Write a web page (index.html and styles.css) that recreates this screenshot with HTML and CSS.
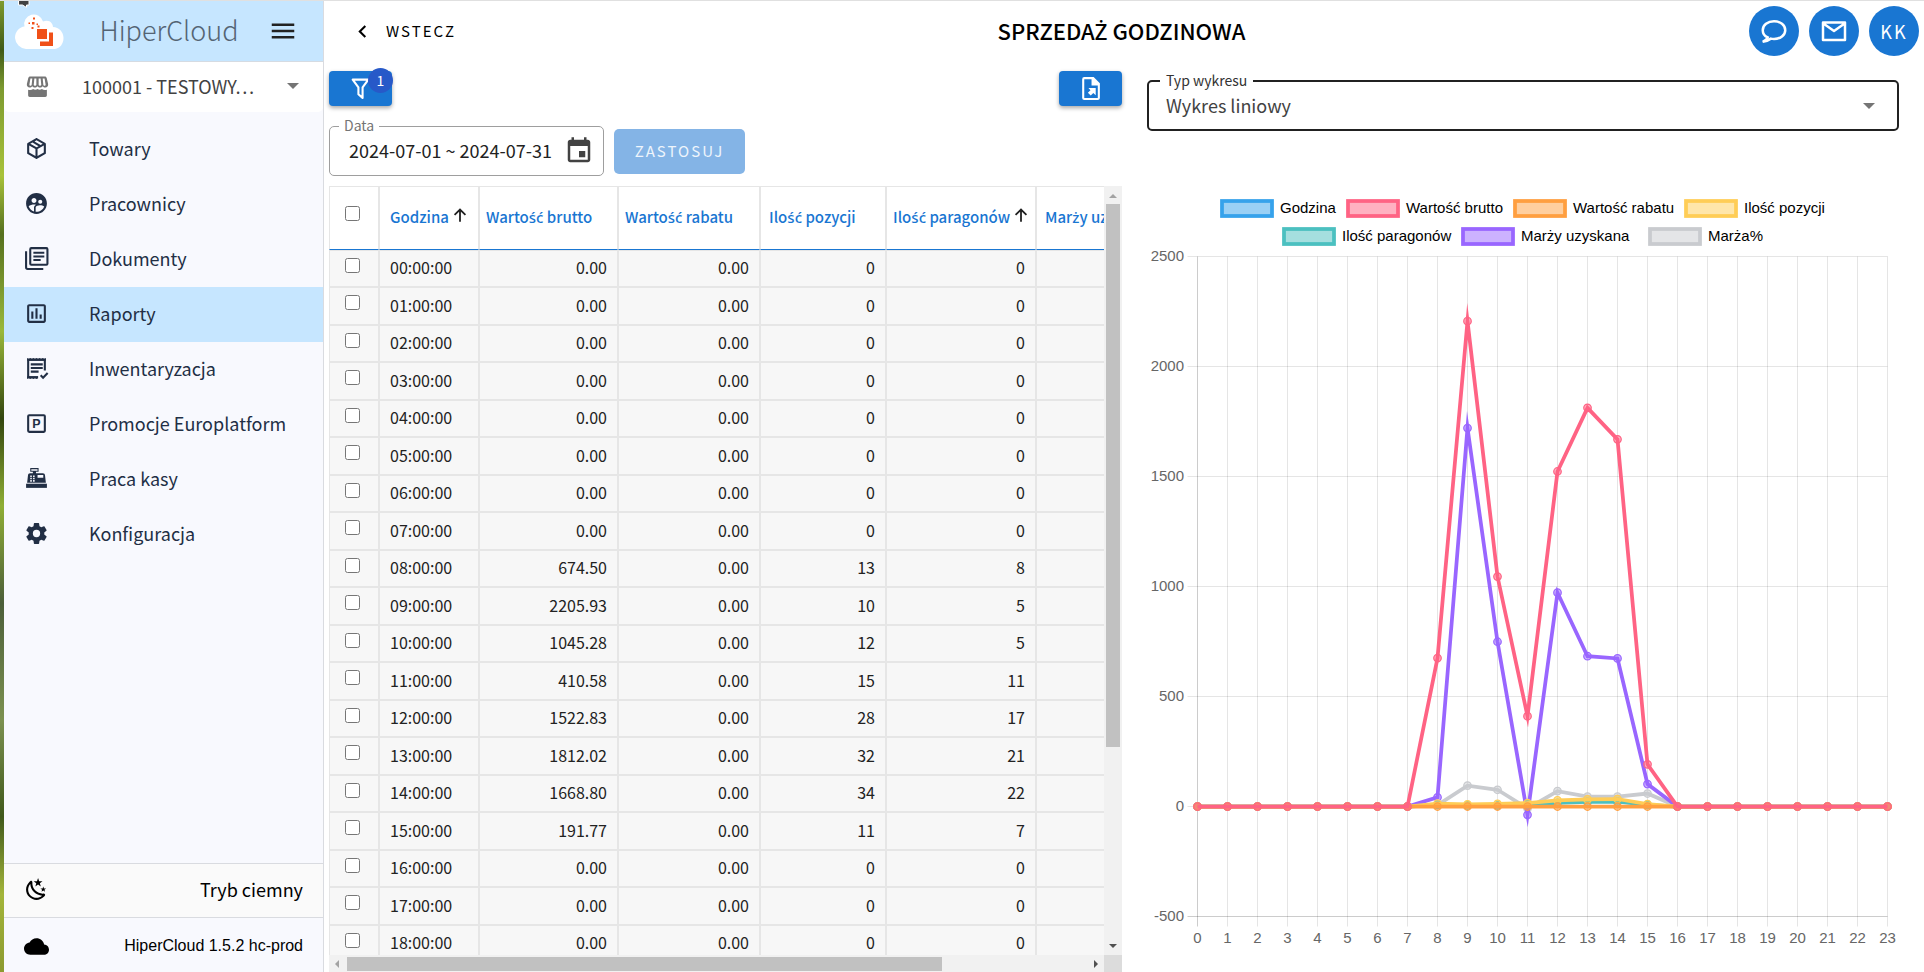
FILE: index.html
```html
<!DOCTYPE html>
<html lang="pl">
<head>
<meta charset="utf-8">
<title>HiperCloud</title>
<link rel="stylesheet" href="styles.css">
</head>
<body>
<div class="app">
  <div class="backdrop"></div>
  <aside class="sidebar">
    <svg class="notch" viewBox="0 0 12 7" aria-hidden="true"><path fill="#424242" stroke="#fff" d="M.5-2v6h4l4 2.500V4H11V-2z"/></svg>
    <header class="brand">
      <svg class="brand-logo" viewBox="0 0 50 40" aria-hidden="true">
        <path fill="#fff" d="M12 38A12 12 0 0 1 1 27C1 20 6 16 10.500 15.500A9.500 9.500 0 0 1 29 10.500C36 8 39 13 39 16C45 16 49.500 21 49.500 27C49.500 33 46 37 41 38Z"/>
        <path fill="#f05018" d="M23 18h10v10H23zM35 21.500h4V35H26v-4.500h9z"/>
        <path fill="#f05018" d="M19 6.500h2v2h-2zM14.500 11.500h1.500v1.500h-1.500zM18 11h2.500v2.500H18zM22.500 12.500h1.500v1.500h-1.500zM17.500 16h2v2h-2zM23.500 14.500h2v2h-2z"/>
      </svg>
      <h1 class="brand-name">HiperCloud</h1>
      <button class="icon-button" type="button" aria-label="Menu">
        <svg class="icon-large" viewBox="0 0 24 24"><path d="M3 6h18v2H3zM3 11h18v2H3zM3 16h18v2H3z"/></svg>
      </button>
    </header>
    <div class="store">
      <svg class="icon store-icon" viewBox="0 0 24 24" aria-hidden="true">
        <path fill-rule="evenodd" d="M5 2.500h14c1 0 1.600.5 1.900 1.500l1.300 5.500c.3 2-1 3.500-2.700 3.500-1 0-1.900-.5-2.500-1.300-.6.800-1.500 1.300-2.500 1.300s-1.900-.5-2.500-1.300c-.6.800-1.500 1.300-2.500 1.300s-1.900-.5-2.500-1.300c-.6.800-1.500 1.300-2.500 1.300-1.700 0-3-1.500-2.700-3.500L3.100 4c.3-1 .9-1.500 1.900-1.500zM5.200 4.300l-1 6c0 1.300 2 1.300 2.200 0l.6-6zM9 4.300l-.6 6c.2 1.300 2.300 1.300 2.500 0v-6zM13.100 4.300v6c.2 1.300 2.300 1.300 2.500 0l-.6-6zM17 4.300l.6 6c.2 1.300 2.200 1.300 2.200 0l-1-6z"/>
        <path d="M3 15c2 .7 3.400.3 4.800-.7 1.300 1 3 1 4.200 0 1.300 1 3 1 4.200 0 1.400 1 2.800 1.400 4.800.7v5.500c0 1-.6 1.500-1.500 1.500h-15c-.9 0-1.500-.5-1.500-1.500z"/>
      </svg>
      <select class="store-select" aria-label="Sklep"><option>100001 - TESTOWY…</option></select>
      <span class="caret"></span>
    </div>
    <nav class="menu">
      <a class="menu-item" href="#"><svg class="icon" viewBox="0 0 24 24"><path d="M21,16.5C21,16.88 20.79,17.21 20.47,17.38L12.57,21.82C12.41,21.94 12.21,22 12,22C11.79,22 11.59,21.94 11.43,21.82L3.53,17.38C3.21,17.21 3,16.88 3,16.5V7.5C3,7.12 3.21,6.79 3.53,6.62L11.43,2.18C11.59,2.06 11.79,2 12,2C12.21,2 12.41,2.06 12.57,2.18L20.47,6.62C20.79,6.79 21,7.12 21,7.5V16.5M12,4.15L10.11,5.22L16,8.61L17.96,7.5L12,4.15M6.04,7.5L12,10.85L13.96,9.75L8.08,6.35L6.04,7.5M5,15.91L11,19.29V12.58L5,9.21V15.91M19,15.91V9.21L13,12.58V19.29L19,15.91Z"/></svg>Towary</a>
      <a class="menu-item" href="#"><svg class="icon" viewBox="0 0 24 24"><path d="M11.99 2c-5.52 0-10 4.48-10 10s4.48 10 10 10 10-4.48 10-10-4.48-10-10-10zm3.610 6.340c1.070 0 1.930.860 1.930 1.930 0 1.070-.860 1.930-1.930 1.930-1.070 0-1.930-.860-1.930-1.930-.010-1.070.860-1.930 1.930-1.930zm-6-1.580c1.300 0 2.360 1.060 2.360 2.360 0 1.300-1.060 2.360-2.360 2.360s-2.360-1.060-2.360-2.360c0-1.310 1.050-2.360 2.360-2.360zm0 9.130v3.750c-2.400-.750-4.300-2.600-5.140-4.960 1.050-1.120 3.670-1.690 5.140-1.690.530 0 1.200.080 1.900.220-1.640.870-1.900 2.020-1.900 2.680zM11.990 20c-.270 0-.530-.010-.790-.040v-4.070c0-1.420 2.940-2.130 4.400-2.130 1.070 0 2.920.390 3.840 1.150-1.170 2.970-4.060 5.090-7.450 5.090z"/></svg>Pracownicy</a>
      <a class="menu-item" href="#"><svg class="icon" viewBox="0 0 24 24"><g fill="none" stroke="currentColor" stroke-width="2"><rect x="6" y="2" width="16.500" height="16" rx="1"/><path d="M2 5v15.500c0 .8.500 1.500 1.500 1.500H18.500M9 6.500h10.500M9 10h10.500M9 13.500h7"/></g></svg>Dokumenty</a>
      <a class="menu-item menu-item-active" href="#" aria-current="page"><svg class="icon" viewBox="0 0 24 24"><path d="M9 17H7v-7h2v7zm4 0h-2V7h2v10zm4 0h-2v-4h2v4zm2 2H5V5h14v14zm0-16H5c-1.100 0-2 .9-2 2v14c0 1.100.9 2 2 2h14c1.100 0 2-.9 2-2V5c0-1.100-.9-2-2-2z"/></svg>Raporty</a>
      <a class="menu-item" href="#"><svg class="icon" viewBox="0 0 24 24"><path fill="none" stroke="currentColor" stroke-width="2" d="M13.500 20.500H4V3.500h16V14M6.500 8h11.500M6.500 11.500h11.500M6.500 15h7.500M16 18.500l2.300 2.300 4.400-4.500"/><path d="M3 4.500V2l1.500 1.200L6 2l1.500 1.200L9 2l1.500 1.200L12 2l1.500 1.200L15 2l1.500 1.200L18 2l1.500 1.200L21 2v2.500zM3 19.500V22l1.500-1.200L6 22l1.500-1.200L9 22l1.500-1.200L12 22l1.500-1.200v-1.300z"/></svg>Inwentaryzacja</a>
      <a class="menu-item" href="#"><svg class="icon" viewBox="0 0 24 24"><rect x="4" y="4" width="16" height="16" rx="1" fill="none" stroke="currentColor" stroke-width="2"/><text class="icon-letter" x="12" y="16.500">P</text></svg>Promocje Europlatform</a>
      <a class="menu-item" href="#"><svg class="icon" viewBox="0 0 24 24"><path fill-rule="evenodd" d="M6 2h8v3.500h-2.500V7H18c1.500 0 2 .8 2.200 2L21 16H3l.8-7C4 7.800 4.500 7 6 7h2.500V5.500H6zM7 3v1.500h6V3zM6 9v1.500h1.500V9zM8.700 9v1.500h1.500V9zM6 11.300v1.500h1.500v-1.500zM8.700 11.300v1.500h1.500v-1.500zM6 13.500V15h1.500v-1.500zM8.700 13.500V15h1.500v-1.500zM13 8.700v2.500h5.500V8.700z"/><path d="M2 17h20v4H2z"/></svg>Praca kasy</a>
      <a class="menu-item" href="#"><svg class="icon" viewBox="0 0 24 24"><path d="M12,15.5A3.5,3.5 0 0,1 8.5,12A3.5,3.5 0 0,1 12,8.5A3.5,3.5 0 0,1 15.5,12A3.5,3.5 0 0,1 12,15.5M19.43,12.97C19.47,12.65 19.5,12.33 19.5,12C19.5,11.67 19.47,11.34 19.43,11L21.54,9.37C21.73,9.22 21.78,8.95 21.66,8.73L19.66,5.27C19.54,5.05 19.27,4.96 19.05,5.05L16.56,6.05C16.04,5.66 15.5,5.32 14.87,5.07L14.5,2.42C14.46,2.18 14.25,2 14,2H10C9.75,2 9.54,2.18 9.5,2.42L9.13,5.07C8.5,5.32 7.96,5.66 7.44,6.05L4.95,5.05C4.73,4.96 4.46,5.05 4.34,5.27L2.34,8.73C2.21,8.95 2.27,9.22 2.46,9.37L4.57,11C4.53,11.34 4.5,11.67 4.5,12C4.5,12.33 4.53,12.65 4.57,12.97L2.46,14.63C2.27,14.78 2.21,15.05 2.34,15.27L4.34,18.73C4.46,18.95 4.73,19.03 4.95,18.95L7.44,17.94C7.96,18.34 8.5,18.68 9.13,18.93L9.5,21.58C9.54,21.82 9.75,22 10,22H14C14.25,22 14.46,21.82 14.5,21.58L14.87,18.93C15.5,18.67 16.04,18.34 16.56,17.94L19.05,18.95C19.27,19.03 19.54,18.95 19.66,18.73L21.66,15.27C21.78,15.05 21.73,14.78 21.54,14.63L19.43,12.97Z"/></svg>Konfiguracja</a>
    </nav>
    <button class="theme-toggle" type="button">
      <svg class="icon" viewBox="0 0 24 24"><path d="M17.75,4.09L15.22,6.03L16.13,9.09L13.5,7.28L10.87,9.09L11.78,6.03L9.25,4.09L12.44,4L13.5,1L14.56,4L17.75,4.09M21.25,11L19.61,12.25L20.2,14.23L18.5,13.06L16.8,14.23L17.39,12.25L15.75,11L17.81,10.95L18.5,9L19.19,10.95L21.25,11M18.97,15.95C19.8,15.87 20.69,17.05 20.16,17.8C19.84,18.25 19.5,18.67 19.08,19.07C15.17,23 8.84,23 4.94,19.07C1.03,15.17 1.03,8.83 4.94,4.93C5.34,4.53 5.76,4.17 6.21,3.85C6.96,3.32 8.14,4.21 8.06,5.04C7.79,7.9 8.75,10.87 10.95,13.06C13.14,15.26 16.1,16.22 18.97,15.95M17.33,17.97C14.5,17.81 11.7,16.64 9.53,14.5C7.36,12.31 6.2,9.5 6.04,6.68C3.23,9.82 3.34,14.64 6.35,17.66C9.37,20.67 14.19,20.78 17.33,17.97Z"/></svg>
      Tryb ciemny
    </button>
    <footer class="version">
      <svg class="icon" viewBox="0 0 24 24"><path d="M19.350 10.040C18.670 6.590 15.640 4 12 4 9.110 4 6.600 5.640 5.350 8.040 2.340 8.360 0 10.910 0 14c0 3.310 2.690 6 6 6h13c2.760 0 5-2.240 5-5 0-2.640-2.050-4.780-4.650-4.960z"/></svg>
      HiperCloud 1.5.2 hc-prod
    </footer>
  </aside>

  <main class="main">
    <header class="topbar">
      <button class="back" type="button">
        <svg class="icon" viewBox="0 0 24 24"><path d="M15.410 16.580L10.830 12l4.580-4.590L14 6l-6 6 6 6z"/></svg>
        WSTECZ
      </button>
      <h2 class="page-title">SPRZEDA<span class="accented">Ż</span> GODZINOWA</h2>
      <div class="actions">
        <button class="round" type="button" aria-label="Czat"><svg class="icon-large" viewBox="0 0 24 24"><path fill="none" stroke="currentColor" stroke-width="2" d="M7 17.100C4.500 16 3 13.900 3 11.300 3 7.300 7 4.200 12 4.200s9 3.100 9 7.100-4 7.100-9 7.100c-.9 0-1.700-.1-2.500-.3C7.700 19.400 5.800 20.300 3 20.700 5 19.600 6.500 18.500 7 17.100z"/></svg></button>
        <button class="round" type="button" aria-label="Poczta"><svg class="icon-large" viewBox="0 0 24 24"><path fill="none" stroke="currentColor" stroke-width="2" stroke-linejoin="round" d="M3.200 5.200h17.600v14H3.200zM3.200 5.800L12 12l8.800-6.200"/></svg></button>
        <button class="round" type="button">KK</button>
      </div>
    </header>

    <div class="panes">
      <section class="pane-table">
        <div class="toolbar">
          <button class="tool" type="button" aria-label="Filtry">
            <svg class="icon" viewBox="0 0 24 24"><path fill="none" stroke="currentColor" stroke-width="2" stroke-linejoin="round" d="M4.500 3.500h15L14 11v10l-4-3.500V11z"/></svg>
            <span class="badge">1</span>
          </button>
          <button class="tool" type="button" aria-label="Eksport">
            <svg class="icon" viewBox="0 0 24 24"><path fill-rule="evenodd" d="M6 1h9l6 6v14a2 2 0 0 1-2 2H6a2 2 0 0 1-2-2V3a2 2 0 0 1 2-2zm0 2v18h13V9h-6V3z"/><path d="M10 11.500h7v7l-2.300-2.300-2.500 2.600-2.700-2.700 2.500-2.500z"/></svg>
          </button>
        </div>
        <form class="filters">
          <fieldset class="field field-date">
            <legend><label for="date">Data</label></legend>
            <input class="field-input" id="date" type="text" value="2024-07-01 ~ 2024-07-31">
            <svg class="icon-large calendar" viewBox="0 0 24 24"><path d="M17 12h-5v5h5v-5zM16 1v2H8V1H6v2H5c-1.110 0-1.990.9-1.990 2L3 19c0 1.100.89 2 2 2h14c1.100 0 2-.9 2-2V5c0-1.100-.9-2-2-2h-1V1h-2zm3 18H5V8h14v11z"/></svg>
          </fieldset>
          <button class="apply" type="button">ZASTOSUJ</button>
        </form>
        <div class="grid">
          <div class="grid-view">
            <table class="hours">
              <colgroup><col class="c-check"><col class="c-hour"><col class="c-gross"><col class="c-disc"><col class="c-pos"><col class="c-rec"><col class="c-margin"></colgroup>
              <thead>
                <tr>
                  <th><input type="checkbox" aria-label="Zaznacz wszystko"></th>
                  <th>Godzina<svg class="sort" viewBox="0 0 24 24"><path d="M13.200 21h-2.400V7.500l-5.200 5.200-1.700-1.700L12 2.900l8.100 8.100-1.700 1.700-5.200-5.200z"/></svg></th>
                  <th>Warto<span class="accented">ść</span> brutto</th>
                  <th>Warto<span class="accented">ść</span> rabatu</th>
                  <th>Ilo<span class="accented">ść</span> pozycji</th>
                  <th>Ilo<span class="accented">ść</span> paragonów<svg class="sort" viewBox="0 0 24 24"><path d="M13.200 21h-2.400V7.500l-5.200 5.200-1.700-1.700L12 2.900l8.100 8.100-1.700 1.700-5.200-5.200z"/></svg></th>
                  <th>Mar<span class="accented">ż</span>y uzyskana</th>
                </tr>
              </thead>
              <tbody id="rows"></tbody>
            </table>
          </div>
          <div class="bar bar-v"><span class="arrow arrow-up"></span><span class="thumb"></span><span class="arrow arrow-down"></span></div>
          <div class="bar bar-h"><span class="arrow arrow-left"></span><span class="thumb"></span><span class="arrow arrow-right"></span></div>
          <div class="corner"></div>
        </div>
      </section>

      <section class="pane-chart">
        <fieldset class="field field-type">
          <legend><label for="type">Typ wykresu</label></legend>
          <select class="field-input" id="type"><option>Wykres liniowy</option></select>
          <span class="caret"></span>
        </fieldset>
        <svg class="chart" id="chart" viewBox="0 0 752 770" role="img" aria-label="Wykres liniowy"></svg>
      </section>
    </div>
  </main>
</div>
<script src="app.js"></script>
</body>
</html>
```
FILE: styles.css
```css
* { box-sizing: border-box; }

body {
  margin: 0;
  font-family: "Noto Sans CJK JP", "Noto Sans", sans-serif;
  font-size: 16px;
  line-height: 24px;
  color: #222;
  background: #fff;
}

button, select, input { font: inherit; color: inherit; }
button { border: 0; padding: 0; background: none; cursor: pointer; }

.app {
  display: grid;
  grid-template-columns: 4px 320px minmax(0, 1fr);
  grid-template-rows: minmax(0, 1fr);
  height: 100vh;
  border-top: 1px solid #e0e0e0;
  overflow: hidden;
}

.backdrop {
  background: linear-gradient(#7f9a2c 0%, #3f5a18 5%, #7d9a30 9%, #a8c23a 18%, #56701f 24%, #9ab83a 34%, #33460f 43%, #8fae35 52%, #4c5f3a 62%, #7c9150 74%, #40591c 84%, #a3b53a 92%, #8c9a30 100%);
}

.icon { width: 25px; height: 25px; fill: currentColor; flex: none; }
.icon-large { width: 30px; height: 30px; fill: currentColor; flex: none; display: block; }
.icon-letter { font: bold 12px "Liberation Sans", sans-serif; text-anchor: middle; }

/* Polish letters that the main family lacks */
.accented { font-family: "Noto Sans", sans-serif; line-height: 1; }

.caret {
  width: 0;
  height: 0;
  border: 6px solid transparent;
  border-top-color: #757575;
  border-bottom: 0;
  pointer-events: none;
}

/* Sidebar */
.sidebar {
  position: relative;
  display: flex;
  flex-direction: column;
  background: #f8f9fe;
  border-right: 1px solid #d9dbe0;
}
.notch { position: absolute; top: 0; left: 14px; width: 12px; height: 7px; }

.brand {
  display: flex;
  align-items: center;
  height: 61px;
  padding: 0 25px 0 10px;
  background: #c6e6ff;
  border-bottom: 1px solid #d5dbe2;
}
.brand-logo { width: 50px; height: 40px; }
.brand-name {
  flex: 1;
  margin: 0;
  padding: 0 0 3px 6px;
  text-align: center;
  font-size: 27px;
  font-weight: 300;
  line-height: 40px;
  color: #546474;
}

.store {
  display: flex;
  align-items: center;
  height: 50px;
  padding: 0 24px 2px 21px;
  background: #fff;
  border-radius: 0 0 5px 5px;
  color: #424242;
}
.store-icon { color: #757575; }
.store-select {
  flex: 1;
  min-width: 0;
  margin-left: 32px;
  padding: 0;
  border: 0;
  appearance: none;
  background: none;
  font-size: 18px;
}

.menu { flex: 1; padding-top: 10px; }
.menu-item {
  display: flex;
  align-items: center;
  gap: 40px;
  height: 55px;
  padding: 0 0 3px 20px;
  color: #222f45;
  font-size: 18px;
  text-decoration: none;
}
.menu-item-active { background: #c6e6ff; }

.theme-toggle, .version {
  display: flex;
  align-items: center;
  justify-content: space-between;
  height: 54px;
  padding: 0 20px 3px;
  border-top: 1px solid #d9dbe0;
  color: #000;
}
.theme-toggle { background: #fafafa; font-size: 18px; }
.version { height: 55px; padding: 2px 20px 0; font-family: "Liberation Sans", sans-serif; }

/* Top bar */
.main { display: flex; flex-direction: column; min-width: 0; }
.topbar {
  display: grid;
  grid-template-columns: 1fr auto 1fr;
  align-items: center;
  height: 60px;
  padding: 0 5px 0 0;
  color: #000;
}
.back {
  display: flex;
  align-items: center;
  gap: 11px;
  padding-left: 26px;
  font-size: 15px;
  letter-spacing: 2px;
}
.page-title { margin: 0; padding-bottom: 2px; font-size: 22px; line-height: 32px; font-weight: 500; }
.actions { display: flex; justify-content: flex-end; gap: 10px; }
.round {
  display: grid;
  place-items: center;
  width: 50px;
  height: 50px;
  border-radius: 50%;
  background: #1976d2;
  color: #fff;
  font-size: 18px;
  letter-spacing: 2px;
}

/* Panes */
.panes { flex: 1; display: grid; grid-template-columns: minmax(0, 1fr) minmax(0, 1fr); grid-template-rows: minmax(0, 1fr); min-height: 0; }
.pane-table { display: flex; flex-direction: column; min-height: 0; padding: 10px 2px 0 5px; }
.pane-chart { padding: 10px 25px 0 23px; }

.toolbar { display: flex; justify-content: space-between; }
.tool {
  position: relative;
  display: grid;
  place-items: center;
  width: 63px;
  height: 35px;
  border-radius: 4px;
  background: #1976d2;
  color: #fff;
  box-shadow: 0 2px 4px rgba(0, 0, 0, .35);
}
.badge {
  position: absolute;
  top: -3px;
  right: -1px;
  width: 25px;
  height: 25px;
  border-radius: 50%;
  background: #2759c8;
  font-size: 14px;
  line-height: 24px;
}

.filters { display: flex; align-items: flex-end; gap: 10px; margin-top: 10px; }
.field {
  display: flex;
  align-items: center;
  min-width: 0;
  height: 60px;
  margin: 0;
  border: 1px solid #9e9e9e;
  border-radius: 5px;
}
.field legend { padding: 0 5px 2px; font-size: 14px; line-height: 18px; color: #757575; }
.field-input {
  flex: 1;
  min-width: 0;
  height: 30px;
  padding: 0 0 2px;
  border: 0;
  outline: 0;
  appearance: none;
  background: none;
  font-size: 18px;
}
.field-date { width: 275px; padding: 0 9px 10px; }
.field-date .field-input { padding-left: 10px; }
.calendar { color: #424242; }
.apply {
  width: 131px;
  height: 45px;
  margin-bottom: 2px;
  padding-bottom: 2px;
  border-radius: 5px;
  background: #84b4e6;
  color: #eef5fc;
  font-size: 15px;
  letter-spacing: 2px;
}

.field-type { border: 2px solid #212121; padding: 0 22px 9px 11px; color: #424242; }
.field-type legend { color: #333; padding: 0 6px 2px; }
.field-type .field-input { padding-left: 6px; }

/* Table */
.grid {
  flex: 1;
  display: grid;
  grid-template-columns: minmax(0, 1fr) 18px;
  grid-template-rows: minmax(0, 1fr) 17px;
  min-height: 0;
  margin-top: 10px;
}
.grid-view { overflow: hidden; }
.hours { width: 877px; table-layout: fixed; border-collapse: separate; border-spacing: 0; }
.c-check { width: 50px; }
.c-hour { width: 100px; }
.c-gross { width: 139px; }
.c-disc { width: 142px; }
.c-pos { width: 126px; }
.c-rec { width: 150px; }
.c-margin { width: 170px; }
.hours th, .hours td { border: 1px solid #e6e6e6; padding: 0 10px 3px; white-space: nowrap; }
.hours th {
  height: 64px;
  padding: 0 6px 2px;
  border-bottom-color: #1976d2;
  color: #1976d2;
  font-size: 15px;
  font-weight: 500;
  text-align: left;
}
.hours th:nth-child(2), .hours td:nth-child(2) { padding-left: 10px; text-align: left; }
.hours th:nth-child(5), .hours th:nth-child(7) { padding-left: 8px; }
.hours th:first-child, .hours td:first-child { padding: 0 3px 0 0; text-align: center; }
.hours tr { height: 37px; }
.hours tr:nth-child(even) { height: 38px; }
.hours td { background: #f7f7f7; text-align: right; line-height: 24px; }
.hours input { width: 15px; height: 15px; margin: 0; vertical-align: 3px; }
.sort { width: 18px; height: 18px; margin-left: 2px; vertical-align: -1px; fill: #212121; }

.bar { display: flex; align-items: center; background: #f1f1f1; }
.bar-v { flex-direction: column; padding: 7px 0; }
.bar-v .thumb { width: 14px; height: 543px; margin-top: 6px; }
.bar-h { grid-row: 2; padding: 0 6px; }
.bar-h .thumb { width: 595px; height: 14px; margin-left: 8px; }
.bar .thumb { background: #c1c1c1; }
.bar .arrow:last-child { margin-top: auto; }
.bar-h .arrow:last-child { margin: 0 0 0 auto; }
.arrow { border: 4px solid transparent; }
.arrow-up { border-bottom-color: #a3a3a3; border-top: 0; margin-top: 1px; }
.arrow-down { border-top-color: #505050; border-bottom: 0; }
.arrow-left { border-right-color: #a3a3a3; border-left: 0; }
.arrow-right { border-left-color: #505050; border-right: 0; }
.corner { background: #dcdcdc; }

/* Chart */
.chart { display: block; width: 100%; margin-top: 55px; font: 15px "Liberation Sans", sans-serif; }
.chart text { fill: #666; }
.chart .key { fill: #000; }
.chart .tick-y { text-anchor: end; }
.chart .tick-x { text-anchor: middle; }
```
FILE: app.js
```js
const HOURS = Array.from({ length: 24 }, (_, i) => i);
const at = (values) => HOURS.map((h) => values[h] || 0);

const gross = at({ 8: 674.5, 9: 2205.93, 10: 1045.28, 11: 410.58, 12: 1522.83, 13: 1812.02, 14: 1668.8, 15: 191.77 });
const discount = at({});
const positions = at({ 8: 13, 9: 10, 10: 12, 11: 15, 12: 28, 13: 32, 14: 34, 15: 11 });
const receipts = at({ 8: 8, 9: 5, 10: 5, 11: 11, 12: 17, 13: 21, 14: 22, 15: 7 });
const margin = at({ 8: 42, 9: 1720, 10: 749, 11: -38, 12: 972, 13: 683, 14: 673, 15: 102 });
const percent = at({ 8: 6, 9: 95, 10: 76, 11: -9, 12: 70, 13: 45, 14: 45, 15: 59 });

/* Table rows */
document.getElementById('rows').innerHTML = HOURS.slice(0, 19).map((h) => {
  const hour = String(h).padStart(2, '0') + ':00:00';
  return `<tr><td><input type="checkbox" aria-label="${hour}"></td><td>${hour}</td>` +
    `<td>${gross[h].toFixed(2)}</td><td>${discount[h].toFixed(2)}</td>` +
    `<td>${positions[h]}</td><td>${receipts[h]}</td><td></td></tr>`;
}).join('');

/* Line chart */
const series = [
  { name: 'Godzina', rgb: '54,162,235', data: null, key: [73, 0] },
  { name: 'Wartość brutto', rgb: '255,99,132', data: gross, key: [199, 0] },
  { name: 'Wartość rabatu', rgb: '255,159,64', data: discount, key: [366, 0] },
  { name: 'Ilość pozycji', rgb: '255,205,86', data: positions, key: [537, 0] },
  { name: 'Ilość paragonów', rgb: '75,192,192', data: receipts, key: [135, 1] },
  { name: 'Marży uzyskana', rgb: '153,102,255', data: margin, key: [314, 1] },
  { name: 'Marża%', rgb: '201,203,207', data: percent, key: [501, 1] },
];
const left = 50.5, right = 740.5, top0 = 70.5, bottom = 730.5;
const px = (h) => left + h * 30;
const py = (v) => bottom - (v + 500) * 0.22;

let out = '';
for (const s of series) {
  const [x, row] = s.key;
  const y = 13 + row * 28;
  out += `<rect x="${x + 2}" y="${y + 2}" width="50" height="15" fill="rgba(${s.rgb},.5)" stroke="rgb(${s.rgb})" stroke-width="3.75"/>`;
  out += `<text class="key" x="${x + 60}" y="${y + 14}">${s.name}</text>`;
}
for (let v = -500; v <= 2500; v += 500) {
  out += `<path d="M${left - 10} ${py(v)}H${right}" stroke="#000" stroke-opacity="${v === -500 ? 0.2 : 0.1}"/>`;
  out += `<text class="tick-y" x="37" y="${py(v) + 4.5}">${v}</text>`;
}
for (const h of HOURS) {
  out += `<path d="M${px(h)} ${top0}V${bottom + 10}" stroke="#000" stroke-opacity="${h === 0 ? 0.2 : 0.1}"/>`;
  out += `<text class="tick-x" x="${px(h)}" y="757">${h}</text>`;
}
for (const s of [...series].reverse()) {
  if (!s.data) continue;
  const points = s.data.map((v, h) => `${px(h)},${py(v)}`).join(' ');
  out += `<polyline points="${points}" fill="none" stroke="rgb(${s.rgb})" stroke-width="3.75" stroke-miterlimit="10"/>`;
  out += s.data.map((v, h) => `<circle cx="${px(h)}" cy="${py(v)}" r="3.75" fill="rgba(${s.rgb},.5)" stroke="rgb(${s.rgb})" stroke-width="1.25"/>`).join('');
}
document.getElementById('chart').innerHTML = out;
```
